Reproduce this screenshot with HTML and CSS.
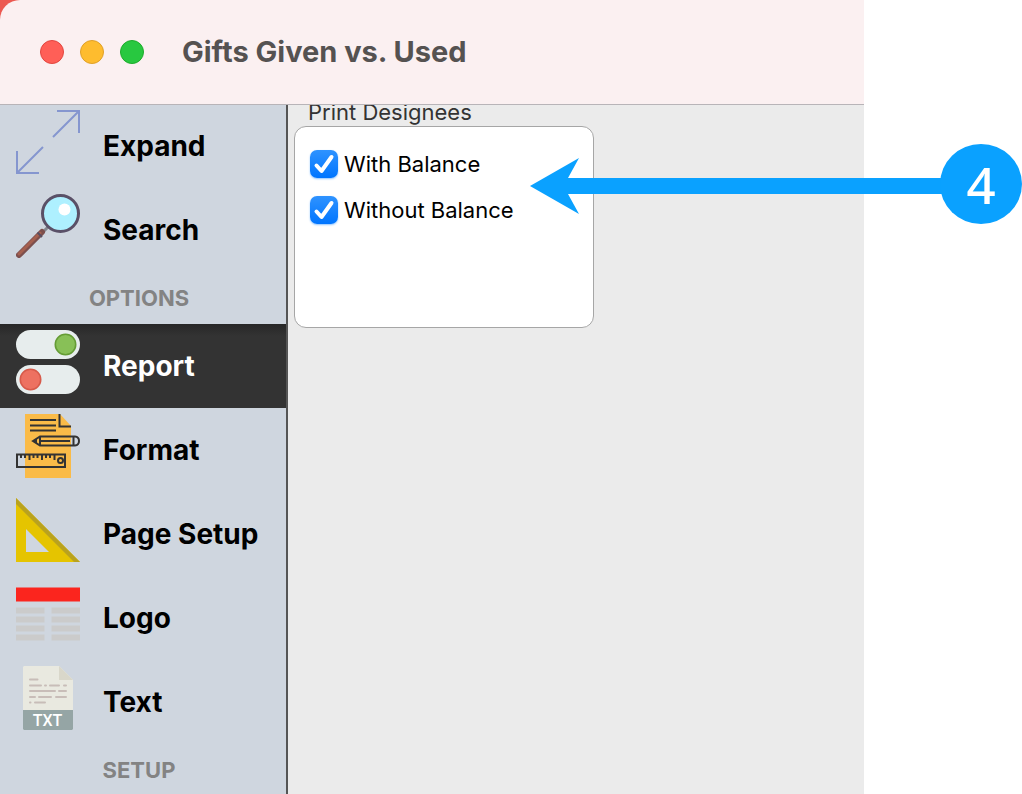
FILE: index.html
```
<!DOCTYPE html>
<html lang="en">
<head>
<meta charset="utf-8">
<title>Gifts Given vs. Used</title>
<link rel="stylesheet" href="styles.css">
</head>
<body>
<div class="desktop">
  <div class="window">
    <header class="titlebar">
      <div class="lights">
        <button class="light close" aria-label="Close"></button>
        <button class="light minimize" aria-label="Minimize"></button>
        <button class="light maximize" aria-label="Zoom"></button>
      </div>
      <h1 class="title">Gifts Given vs. Used</h1>
    </header>
    <div class="body">
      <nav class="sidebar">
        <button class="item">
          <svg class="icon" viewBox="0 0 64 64" fill="none" stroke="#8596cf" stroke-width="2"><path d="M41 1H63V23M63 1L37 27M1 41V63H23M1 63L27 37"/></svg>
          <span>Expand</span>
        </button>
        <button class="item">
          <svg class="icon" viewBox="0 0 64 64">
            <path d="M27 38L32 33" stroke="#85868f" stroke-width="3"/>
            <path d="M3 61L26 38" stroke="#7d4f4d" stroke-width="6" stroke-linecap="round"/>
            <path d="M3 60L24 39" stroke="#a5604f" stroke-width="3" stroke-linecap="round"/>
            <path d="M21.500 38.500L26 43" stroke="#584e61" stroke-width="2"/>
            <circle cx="44.500" cy="19.500" r="18" fill="#aef0ff" stroke="#5a5067" stroke-width="3"/>
            <circle cx="48.500" cy="15.500" r="6" fill="#fff"/>
          </svg>
          <span>Search</span>
        </button>
        <h2 class="heading">OPTIONS</h2>
        <button class="item selected" aria-current="page">
          <svg class="icon" viewBox="0 0 64 64">
            <rect width="64" height="29" rx="14.500" fill="#e7eded"/>
            <rect y="35" width="64" height="29" rx="14.500" fill="#e7eded"/>
            <circle cx="49.500" cy="14.500" r="10.200" fill="#88c057" stroke="#659c35" stroke-width="1.600"/>
            <circle cx="14.500" cy="49.500" r="10.200" fill="#ed7161" stroke="#d75a4a" stroke-width="1.600"/>
          </svg>
          <span>Report</span>
        </button>
        <button class="item">
          <svg class="icon" viewBox="0 0 64 64" fill="none" stroke="#333" stroke-width="2">
            <path d="M9 0H44L55 12V64H9Z" fill="#fabb48" stroke="none"/>
            <path d="M14 6H40M14 11.500H40M14 16.500H40M43.500 0V12.500H55"/>
            <path d="M17 27L24 22.500H59Q63 23 63 27Q63 31 59 31.500H24ZM24 22.500V31.500M57.500 22.500V31.500M24 27H54"/>
            <path d="M17 27L21 24V30Z" fill="#333" stroke="none"/>
            <path d="M1 40.500H49V53H1ZM5 40V44M9 40V44M13.500 40V46M17.500 40V44M21.500 40V44M26 40V46M30 40V44M34 40V44M38.500 40V46"/>
            <circle cx="44.500" cy="46.500" r="2.500"/>
          </svg>
          <span>Format</span>
        </button>
        <button class="item">
          <svg class="icon" viewBox="0 0 64 64">
            <path d="M0 0L64 64H0ZM10 31V54H33Z" fill="#e5c400" fill-rule="evenodd"/>
            <path d="M0 0L64 64H58L0 6Z" fill="#b9a21e"/>
          </svg>
          <span>Page Setup</span>
        </button>
        <button class="item">
          <svg class="icon" viewBox="0 0 64 64">
            <path d="M0 5.500H64V19.500H0Z" fill="#fb251e"/>
            <path d="M0 25.500H28.500V31.500H0ZM35.500 25.500H64V31.500H35.500ZM0 34.500H28.500V40.500H0ZM35.500 34.500H64V40.500H35.500ZM0 43.500H28.500V49.500H0ZM35.500 43.500H64V49.500H35.500ZM0 52.500H28.500V58.500H0ZM35.500 52.500H64V58.500H35.500Z" fill="#cbcbcb"/>
          </svg>
          <span>Logo</span>
        </button>
        <button class="item">
          <svg class="icon" viewBox="0 0 64 64">
            <path d="M8 0H43L57 14V45H7V1Z" fill="#e9e9e0"/>
            <path d="M43 0V14H57Z" fill="#d9d7ca"/>
            <path d="M7 44H57V63L56 64H8L7 63Z" fill="#95a5a5"/>
            <path d="M14 13.500H21.500M14 19.500H25M29 19.500H30M34 19.500H43M48 19.500H50M14 25H39M43 25H50M14 31H19M23 31H35M40 31H50M14 36.500H14.500M19 36.500H29" stroke="#c8bdb8" stroke-width="2" stroke-linecap="round"/>
            <text class="file-type" x="31.500" y="60" text-anchor="middle">TXT</text>
          </svg>
          <span>Text</span>
        </button>
        <h2 class="heading">SETUP</h2>
      </nav>
      <main class="content">
        <div class="group" role="group" aria-labelledby="designees">
          <div class="group-label" id="designees">Print Designees</div>
          <div class="panel">
            <label class="option">
              <span class="check"><input type="checkbox" checked><svg viewBox="0 0 28 28"><path d="M6.500 15.500L11.500 21L21.500 7"/></svg></span>
              With Balance
            </label>
            <label class="option">
              <span class="check"><input type="checkbox" checked><svg viewBox="0 0 28 28"><path d="M6.500 15.500L11.500 21L21.500 7"/></svg></span>
              Without Balance
            </label>
          </div>
        </div>
      </main>
    </div>
  </div>
  <div class="callout">
    <svg class="arrow-head" viewBox="0 0 50 56"><path d="M0 28L49 0L38 20H50V36H38L49 56Z"/></svg>
    <div class="arrow-line"></div>
    <div class="badge">4</div>
  </div>
</div>
</body>
</html>
```
FILE: styles.css
```
* {
  box-sizing: border-box;
}

body {
  margin: 0;
  overflow: hidden;
  background: #fff;
  color: #000;
  font-family: Inter, "Liberation Sans", sans-serif;
}

button {
  border: 0;
  padding: 0;
  font: inherit;
  color: inherit;
}

.desktop {
  position: relative;
  padding-right: 158px;
}

.window {
  display: flex;
  flex-direction: column;
  min-height: 100vh;
  background: #ec5951;
}

.titlebar {
  display: flex;
  align-items: center;
  gap: 38px;
  height: 105px;
  padding-left: 40px;
  border-bottom: 1px solid #b8b4b8;
  border-top-left-radius: 20px;
  background: #fbf0f1;
}

.lights {
  display: flex;
  gap: 16px;
}

.light {
  width: 24px;
  height: 24px;
  border-radius: 50%;
}

.close {
  border: 1px solid #e2463f;
  background: #ff5f57;
}

.minimize {
  border: 1px solid #e0a028;
  background: #febc2e;
}

.maximize {
  border: 1px solid #1dac2b;
  background: #28c840;
}

.title {
  margin: 0;
  color: #555251;
  font-size: 29px;
  font-weight: 700;
  line-height: 36px;
}

.body {
  display: flex;
  flex: 1;
  margin-top: -1px;
}

.sidebar {
  flex: none;
  width: 288px;
  border-right: 2px solid #555;
  background: #cfd6df;
}

.item {
  display: flex;
  align-items: center;
  gap: 23px;
  width: 100%;
  height: 84px;
  padding-left: 16px;
  background: none;
  font-size: 28px;
  font-weight: 700;
  text-align: left;
}

.selected {
  background: linear-gradient(#272727, #333 12px);
  color: #fff;
}

.icon {
  flex: none;
  align-self: flex-start;
  width: 64px;
  height: 64px;
  margin-top: 6px;
}

.file-type {
  fill: #fff;
  font-family: Roboto, sans-serif;
  font-size: 16px;
  font-weight: 500;
}

.heading {
  margin: 0;
  padding-right: 8px;
  color: #838383;
  font-size: 22px;
  font-weight: 700;
  line-height: 52px;
  text-align: center;
}

.content {
  flex: 1;
  padding-left: 6px;
  background: #ebebeb;
}

.group {
  width: 300px;
  font-size: 22px;
}

.group-label {
  padding: 0 0 6px 14px;
  color: #333;
  line-height: 16px;
}

.panel {
  display: flex;
  flex-direction: column;
  gap: 18px;
  min-height: 202px;
  padding: 23px 15px;
  border: 1px solid #a6a6a6;
  border-radius: 12px;
  background: #fff;
}

.option {
  display: flex;
  align-items: center;
  gap: 6px;
  line-height: 28px;
}

.check {
  display: grid;
  width: 28px;
  height: 28px;
}

.check > * {
  grid-area: 1 / 1;
  width: 28px;
  height: 28px;
}

.check input {
  appearance: none;
  margin: 0;
  border: 1px solid #b0b0b0;
  border-radius: 7px;
  background: #fff;
}

.check input:checked {
  border: 0;
  background: linear-gradient(#2f93ff, #0075ff);
  box-shadow: 0 1px 2px #8fc4ff;
}

.check svg {
  fill: none;
  stroke: #fff;
  stroke-width: 4;
  stroke-linecap: round;
  stroke-linejoin: round;
  pointer-events: none;
}

.titlebar,
.callout {
  z-index: 1;
}

.callout {
  position: absolute;
  top: 144px;
  right: 0;
  left: 530px;
  display: flex;
  align-items: center;
  height: 84px;
  pointer-events: none;
}

.arrow-head {
  flex: none;
  width: 50px;
  height: 56px;
  fill: #0aa1ff;
}

.arrow-line {
  flex: 1;
  height: 16px;
  margin-right: -4px;
  background: #0aa1ff;
}

.badge {
  flex: none;
  align-self: flex-start;
  width: 82px;
  height: 80px;
  border-radius: 50%;
  background: #0aa1ff;
  color: #fff;
  font-family: "Noto Sans", sans-serif;
  font-size: 51px;
  font-weight: 500;
  line-height: 80px;
  text-align: center;
}
```
